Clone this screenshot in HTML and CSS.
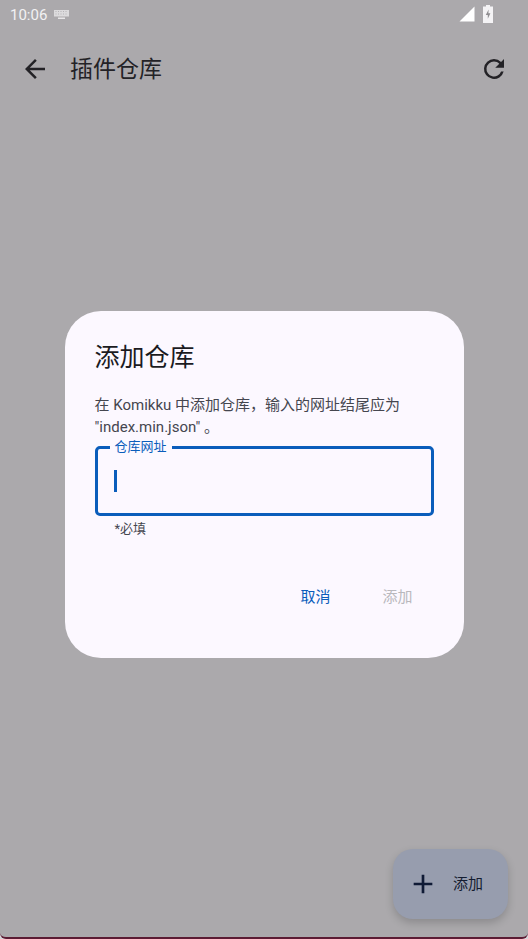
FILE: index.html
```html
<!DOCTYPE html>
<html lang="zh-CN">
<head>
    <meta charset="UTF-8">
    <meta name="viewport" content="width=device-width, initial-scale=1.0">
    <link rel="stylesheet" href="styles.css">
</head>
<body>
    <div class="screen">
        <!-- Status bar -->
        <div class="status-bar">
            <span class="clock">10:06</span>
            <svg class="keyboard-icon" width="15" height="10" viewBox="0 0 15 10">
                <path d="M0 0h15v6.5H0z" fill="#dcdbdd"/>
                <path d="M2 1v1M4.5 1v1M7 1v1M9.5 1v1M12 1v1M2 3.5v1M4.5 3.5v1M7 3.5v1M9.5 3.5v1M12 3.5v1" stroke="#b5b3b6" stroke-width="1"/>
                <path d="M4 7.5h7v1.5H4z" fill="#e8e7e9"/>
            </svg>
            <span class="spacer"></span>
            <svg class="signal-icon" width="16" height="16" viewBox="0 0 16 16">
                <path d="M0.5 15.5 15.5 0.5v15z" fill="#fff"/>
            </svg>
            <svg class="battery-icon" width="10" height="18" viewBox="0 0 10 18">
                <path d="M3 0h4v1.5h3V18H0V1.5h3z" fill="#f4f3f5"/>
                <path d="M5.6 4.5 2.8 10h2v3.8l2.6-5.6h-2z" fill="#8f8d90"/>
            </svg>
        </div>

        <!-- Top app bar -->
        <header class="top-bar">
            <svg class="bar-icon" width="30" height="30" viewBox="0 0 24 24">
                <path d="M20 11H7.83l5.59-5.59L12 4l-8 8 8 8 1.41-1.41L7.83 13H20z"/>
            </svg>
            <h1 class="bar-title">插件仓库</h1>
            <svg class="bar-icon" width="30" height="30" viewBox="0 0 24 24">
                <path d="M17.65 6.35A7.96 7.96 0 0 0 12 4a8 8 0 1 0 7.73 10h-2.08A6 6 0 1 1 12 6c1.66 0 3.14.69 4.22 1.78L13 11h7V4z"/>
            </svg>
        </header>

        <!-- Add button -->
        <button class="fab">
            <svg width="32" height="32" viewBox="0 0 24 24">
                <path d="M19 13h-6v6h-2v-6H5v-2h6V5h2v6h6z"/>
            </svg>
            <span class="fab-label">添加</span>
        </button>

        <!-- Dialog -->
        <div class="scrim">
            <div class="dialog">
                <h2 class="dialog-title">添加仓库</h2>
                <p class="dialog-text">在 Komikku 中添加仓库，输入的网址结尾应为 "index.min.json" 。</p>
                <div class="field">
                    <label class="field-label">仓库网址</label>
                    <span class="caret"></span>
                </div>
                <div class="field-hint">*必填</div>
                <div class="dialog-actions">
                    <button class="text-btn">取消</button>
                    <button class="text-btn disabled">添加</button>
                </div>
            </div>
        </div>
    </div>
</body>
</html>
```

FILE: styles.css
```css
* {
    box-sizing: border-box;
}

html, body {
    margin: 0;
    height: 100%;
}

body {
    font-family: Roboto, "Noto Sans CJK SC", sans-serif;
    background: #d8d6da;
    overflow: hidden;
}

.screen {
    position: relative;
    height: 939px;
    display: flex;
    flex-direction: column;
    background: #aba9ac;
    border-bottom: 2px solid #5c1c34;
    border-radius: 0 0 6px 6px;
}

.status-bar {
    height: 31px;
    padding: 0 35px 1px 10px;
    display: flex;
    align-items: center;
    gap: 7px;
    color: #f2f1f3;
}

.clock {
    font-size: 15px;
}

.spacer {
    flex: 1;
}

.signal-icon {
    margin-top: -2px;
}

.battery-icon {
    margin-left: 1px;
    margin-top: -2px;
}

.top-bar {
    height: 76px;
    padding: 0 19px 0 20px;
    display: flex;
    align-items: center;
}

.bar-icon {
    fill: #232226;
}

.bar-title {
    flex: 1;
    margin: 0 0 5px 20px;
    font-size: 23px;
    font-weight: 400;
    color: #232226;
}

.fab {
    position: absolute;
    right: 20px;
    bottom: 18px;
    width: 115px;
    height: 70px;
    padding: 0 0 0 14px;
    display: flex;
    align-items: center;
    gap: 14px;
    border: 0;
    border-radius: 20px;
    background: #979dae;
    color: #141c30;
    font-family: inherit;
    font-size: 15px;
    box-shadow: 0 4px 8px rgba(0, 0, 0, 0.18);
}

.fab svg {
    fill: #0f1a35;
}

.fab-label {
    padding-bottom: 4px;
}

.scrim {
    position: absolute;
    inset: 0;
    display: flex;
    justify-content: center;
    padding-top: 311px;
}

.dialog {
    width: 399px;
    height: 347px;
    padding: 31px 30px 0;
    border-radius: 36px;
    background: #fcf8ff;
    display: flex;
    flex-direction: column;
}

.dialog-title {
    margin: 0;
    font-size: 25px;
    line-height: 32px;
    font-weight: 400;
    color: #1b1b1f;
}

.dialog-text {
    margin: 20px 0 0;
    font-size: 15px;
    line-height: 22px;
    color: #45464f;
}

.field {
    position: relative;
    margin: 8px 0 0;
    height: 70px;
    padding: 0 16px;
    border: 3px solid #0a5dbb;
    border-radius: 5px;
    display: flex;
    align-items: center;
}

.field-label {
    position: absolute;
    left: 12px;
    top: -10px;
    padding: 0 5px;
    font-size: 13px;
    line-height: 16px;
    background: #fcf8ff;
    color: #0a5dbb;
}

.caret {
    width: 3px;
    height: 22px;
    background: #0a5dbb;
}

.field-hint {
    margin: 5px 0 0 20px;
    font-size: 13px;
    line-height: 16px;
    color: #45464f;
}

.dialog-actions {
    margin-top: 38px;
    padding-right: 13px;
    display: flex;
    justify-content: flex-end;
    gap: 36px;
}

.text-btn {
    width: 46px;
    height: 40px;
    padding: 0;
    border: 0;
    background: none;
    font-family: inherit;
    font-size: 15px;
    color: #0a5dbb;
}

.text-btn.disabled {
    color: #b9b8bd;
}
```
